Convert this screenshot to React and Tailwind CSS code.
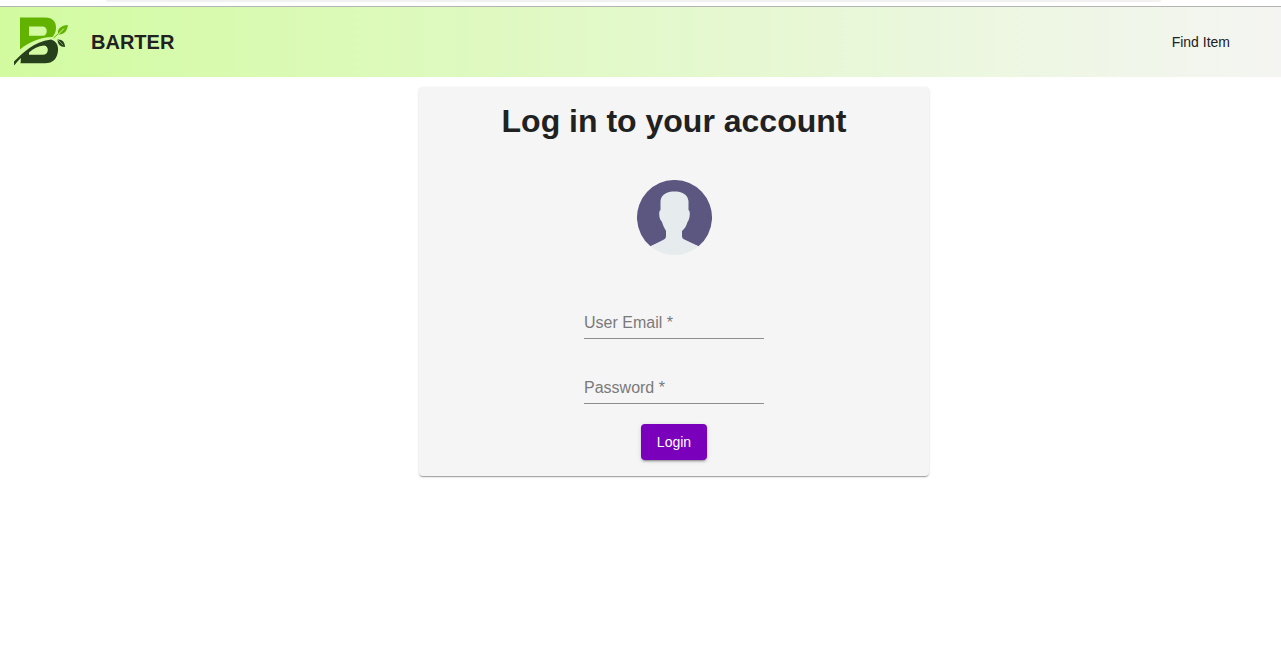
function Logo() {
  return (
    <svg viewBox="0 0 56 52" className="h-[52px] w-14" aria-hidden="true">
      <path
        fillRule="evenodd"
        fill="#62b200"
        d="M6 1.500H31C39 1.500 42 6 42 11.500C42 15.500 41 18 38.500 21C25 21.500 15 26 6 33.500ZM15 10.500V19.800H29C34 19.800 34 10.500 29 10.500Z"
      />
      <path
        fillRule="evenodd"
        fill="#25401b"
        d="M0 49.500V45.500C9 37 19 26 37 23.500C42 25 44.500 29 44 34.500C43.500 42.500 39 47.300 31 47.300H6.500L7 42C4.500 44.500 2.500 46.500 0 49.500ZM15 36.500V38.800H29C35 38.800 35.500 30 30 29.500C24 30 19.500 32.500 15 36.500Z"
      />
      <path fill="#62b200" d="M54 9C47 9.500 43 12.500 44 18.500C50 19 53 15 54 9Z" />
      <path fill="none" stroke="#d3fba3" strokeWidth="1" d="M43 19.500L50 12.500" />
      <path fill="none" stroke="#62b200" strokeWidth="1" d="M39.500 22L44 18" />
      <path fill="#25401b" d="M43.500 23.500C48 23 51 26 51 31C46 31 43.500 28 43.500 23.500Z" />
      <path fill="none" stroke="#d3fba3" strokeWidth="0.500" d="M44 24L49 29" />
    </svg>
  );
}

function Avatar() {
  return (
    <svg viewBox="0 0 75 75" className="size-[75px]" role="img" aria-label="User">
      <path
        fill="#5b5780"
        d="M13.500 66.300A37.500 37.500 0 1 1 61.500 66.300L48.500 61H26Z"
      />
      <path
        fill="#e6ebee"
        d="M37.500 11.500C30 11.500 24.500 14 23.500 21V30C22 31 22 34 22.500 37C23 40 24.500 41 25 42C26 46 28 49 29 51V56C29 58 28 59 26 60L13.500 66.300A37.500 37.500 0 0 0 61.500 66.300L48.500 60C46 59 45 58 45 56V51C47.500 49 49.500 46 50.500 42C51.500 41 52 39 52.500 37C53 34 53 31 51.500 30V21C50.500 14 45 11.500 37.500 11.500Z"
      />
    </svg>
  );
}

function Field({ id, label, type }) {
  return (
    <div className="relative w-[180px] pt-4">
      <input
        id={id}
        type={type}
        required
        placeholder=" "
        className="peer block h-8 w-full border-b border-[#8e8e8e] bg-transparent text-base text-[#212121] shadow-none outline-none focus:border-[#7b00bb]"
      />
      <label
        htmlFor={id}
        className="pointer-events-none absolute left-0 top-0 text-xs leading-4 text-[#7a7a7a] peer-placeholder-shown:top-5 peer-placeholder-shown:text-base peer-placeholder-shown:leading-6"
      >
        {label} *
      </label>
    </div>
  );
}

export default function App() {
  return (
    <div className="min-h-screen bg-white font-['Liberation_Sans',Arial,sans-serif] text-[#212121]">
      <div className="h-1.5 pl-[106px] pr-[120px]">
        <div className="h-0.5 rounded-b-full bg-[#f1f1f1]" />
      </div>
      <header className="flex h-[71px] items-center justify-between border-t border-[#b4b4b4] bg-linear-to-r from-[#d2fba0] to-[#f4f5f2] pl-3.5 pr-[51px]">
        <a href="#home" className="flex items-center gap-[21px]">
          <Logo />
          <span className="text-xl font-bold">BARTER</span>
        </a>
        <nav>
          <a href="#find" className="text-sm">Find Item</a>
        </nav>
      </header>
      <main className="flex justify-center pl-[67px] pt-2.5">
        <form
          onSubmit={(event) => event.preventDefault()}
          className="flex w-full max-w-[510px] flex-col items-center rounded bg-[#f5f5f5] pb-4 pt-3 shadow-[0_2px_1px_-1px_rgba(0,0,0,0.2),0_1px_1px_0_rgba(0,0,0,0.14),0_1px_3px_0_rgba(0,0,0,0.12)]"
        >
          <h1 className="mb-[37px] text-[32px] font-bold leading-[44px]">Log in to your account</h1>
          <Avatar />
          <div className="mt-9 flex flex-col gap-[17px]">
            <Field id="email" label="User Email" type="email" />
            <Field id="password" label="Password" type="password" />
          </div>
          <button
            type="submit"
            className="mt-5 h-9 rounded bg-[#7b00bb] px-4 text-sm font-medium text-white shadow-[0_3px_1px_-2px_rgba(0,0,0,0.2),0_2px_2px_0_rgba(0,0,0,0.14),0_1px_5px_0_rgba(0,0,0,0.12)]"
          >
            Login
          </button>
        </form>
      </main>
    </div>
  );
}
